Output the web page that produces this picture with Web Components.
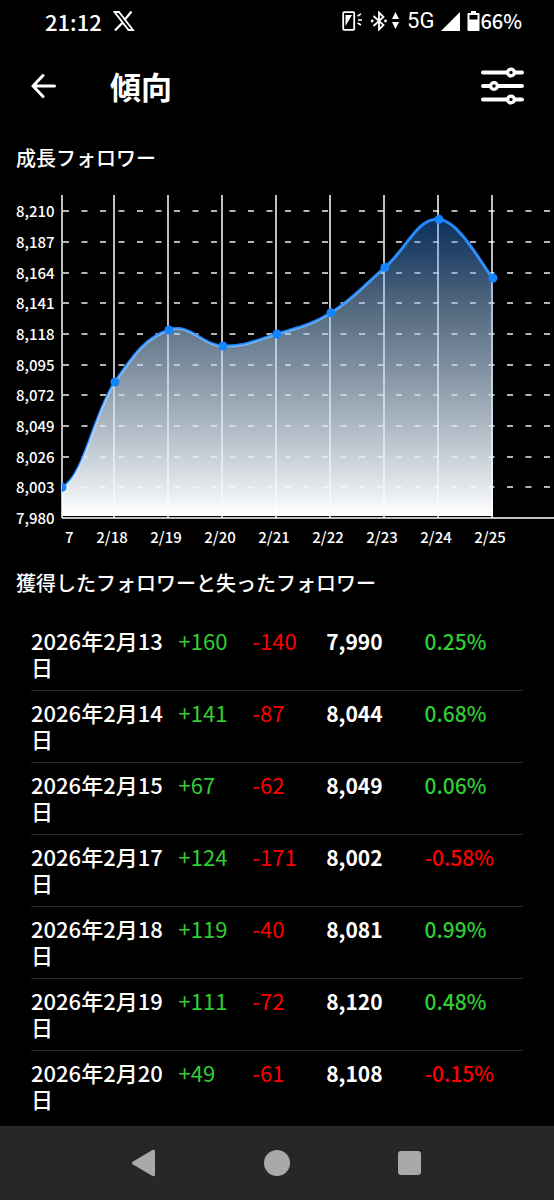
<!DOCTYPE html>
<html lang="ja">
<head>
<meta charset="utf-8">
<meta name="viewport" content="width=device-width, initial-scale=1">
<title>傾向</title>
<style>
    body {
        margin: 0;
        background-color: #000;
        color: #fff;
        font-family: "Noto Sans CJK JP", "Noto Sans", sans-serif;
    }
</style>
</head>
<body>
<trends-page>
    <status-bar slot="top" time="21:12" battery="66%"></status-bar>
    <app-header slot="top">傾向</app-header>
    <page-section heading="成長フォロワー">
        <growth-chart></growth-chart>
    </page-section>
    <page-section heading="獲得したフォロワーと失ったフォロワー">
        <follower-table></follower-table>
    </page-section>
    <nav-bar slot="bottom"></nav-bar>
</trends-page>

<script>
class TrendsPage extends HTMLElement {
    constructor() {
        super();
        this.attachShadow({ mode: 'open' })

        this.shadowRoot.innerHTML = `
        <style>
            :host {
                display: flex;
                flex-direction: column;
                min-height: 100vh;
            }

            main {
                flex: 1;
            }
        </style>

        <slot name="top"></slot>
        <main><slot></slot></main>
        <slot name="bottom"></slot>
        `
    }
}

class StatusBar extends HTMLElement {
    constructor() {
        super();
        this.attachShadow({ mode: 'open' })

        this.shadowRoot.innerHTML = `
        <style>
            :host {
                display: flex;
                justify-content: space-between;
                align-items: center;
                height: 42px;
                padding: 0 32px 0 45px;
                font-size: 22px;
                font-weight: 500;
                line-height: 26px;
            }

            div {
                display: flex;
                align-items: center;
            }

            svg {
                display: block;
                fill: #fff;
            }

            .left {
                gap: 11px;
            }

            .icons {
                gap: 7px;
            }

            .network {
                font-family: Roboto, sans-serif;
                font-weight: 400;
            }

            .battery {
                font-size: 20px;
            }
        </style>

        <div class="left">
            <span id="time"></span>
            <svg width="22" height="20" viewBox="0 0 22 20">
                <path d="M1.500 1 H6 L20 19 H15.500 Z" fill="none" stroke="#fff" stroke-width="1.8"/>
                <path d="M18.500 0.5 L12.3 8 M9.3 12 L2 19.5" stroke="#fff" stroke-width="2.2"/>
            </svg>
        </div>
        <div class="icons">
            <svg width="21" height="20" viewBox="0 0 21 20">
                <rect x="1.2" y="1.2" width="11" height="17.6" rx="1" fill="none" stroke="#fff" stroke-width="1.8"/>
                <path d="M3.5 4 H10 L3.5 15 Z"/>
                <path d="M15.5 5 L19 2.8 M16 9 H20 M15.5 12 L19 14" stroke="#fff" stroke-width="1.5"/>
            </svg>
            <svg width="30" height="20" viewBox="0 0 30 20">
                <path d="M3.5 5 L13.5 14 L9 18.5 V1.5 L13.5 6 L3.5 15" fill="none" stroke="#fff" stroke-width="1.8"/>
                <circle cx="2.2" cy="10" r="1.4"/>
                <circle cx="15.5" cy="10" r="1.4"/>
                <path d="M25.5 1 L29 8 H22 Z M25.5 18 L22 11 H29 Z"/>
            </svg>
            <span class="network">5G</span>
            <svg width="19" height="19" viewBox="0 0 19 19">
                <path d="M19 0 V19 H0 Z"/>
            </svg>
            <div class="battery">
                <svg width="13" height="20" viewBox="0 0 13 20">
                    <path fill-rule="evenodd" d="M4 0 H9 V2 H12 Q12.5 2 12.5 3 V19 Q12.5 20 11.5 20 H1.5 Q0.5 20 0.5 19 V3 Q0.5 2 1.5 2 H4 Z M2.5 4 V8.5 H10.5 V4 Z"/>
                </svg>
                <span id="battery"></span>
            </div>
        </div>
        `

        this.shadowRoot.getElementById("time").textContent = this.getAttribute("time");
        this.shadowRoot.getElementById("battery").textContent = this.getAttribute("battery");
    }
}

class AppHeader extends HTMLElement {
    constructor() {
        super();
        this.attachShadow({ mode: 'open' })

        this.shadowRoot.innerHTML = `
        <style>
            :host {
                display: flex;
                align-items: center;
                height: 88px;
                padding: 0 30px 0 31px;
            }

            h1 {
                flex: 1;
                margin: 0 0 0 54px;
                font-size: 31px;
                font-weight: 700;
                line-height: 40px;
            }

            button {
                padding: 0;
                border: 0;
                background: none;
                cursor: pointer;
            }

            svg {
                display: block;
                fill: none;
                stroke: #fff;
                stroke-linecap: round;
            }
        </style>

        <button aria-label="戻る">
            <svg width="25" height="26" viewBox="0 0 25 26" stroke-width="3">
                <path d="M23.5 13 H2 M12 2.5 L2 13 L12 23.5"/>
            </svg>
        </button>
        <h1><slot></slot></h1>
        <button aria-label="フィルター">
            <svg width="43" height="38" viewBox="0 0 43 38" stroke-width="4">
                <path d="M2 5.5 H41 M2 19 H41 M2 32.5 H41"/>
                <g fill="#000" stroke-width="3.4">
                    <circle cx="30" cy="5.5" r="3.4"/>
                    <circle cx="13" cy="19" r="3.4"/>
                    <circle cx="30" cy="32.5" r="3.4"/>
                </g>
            </svg>
        </button>
        `
    }
}

class PageSection extends HTMLElement {
    constructor() {
        super();
        this.attachShadow({ mode: 'open' })

        this.shadowRoot.innerHTML = `
        <style>
            :host {
                display: block;
            }

            h2 {
                margin: 0;
                padding: 14px 16px 8px;
                font-size: 20px;
                font-weight: 500;
                line-height: 28px;
            }
        </style>

        <h2></h2>
        <slot></slot>
        `

        this.shadowRoot.querySelector("h2").textContent = this.getAttribute("heading");
    }
}

// the first point is left of the visible range, it only shapes the curve
const GROWTH = [
    ['2/15', 8049],
    ['2/17', 8003],
    ['2/18', 8082],
    ['2/19', 8121],
    ['2/20', 8109],
    ['2/21', 8118],
    ['2/22', 8134],
    ['2/23', 8168],
    ['2/24', 8204],
    ['2/25', 8160],
];

class GrowthChart extends HTMLElement {
    constructor() {
        super();
        this.attachShadow({ mode: 'open' })

        const left = 62;
        const bottom = 338;
        const step = 54;
        const toX = i => left + (i - 1) * step - (i > 1 ? 1 : 0);
        const toY = v => bottom - (v - 7980) * 4 / 3;

        const points = GROWTH.map(([, value], i) => [toX(i), toY(value)]);

        let curve = `M${points[0]}`;
        for (let i = 1; i < points.length; i++) {
            const a = points[i - 2] || points[i - 1];
            const b = points[i - 1];
            const c = points[i];
            const d = points[i + 1] || c;
            const c1 = [b[0] + (c[0] - a[0]) * 0.2, b[1] + (c[1] - a[1]) * 0.2];
            const c2 = [c[0] - (d[0] - b[0]) * 0.2, c[1] - (d[1] - b[1]) * 0.2];
            curve += ` C${c1} ${c2} ${c}`;
        }

        let rows = '';
        for (let v = 8210; v >= 7980; v -= 23) {
            const y = Math.round(toY(v));
            rows += `<text x="16" y="${y + 6}">${v.toLocaleString('en-US')}</text>`;
            if (v > 7980) {
                rows += `<line class="dash" x1="63" x2="554" y1="${y}" y2="${y}"/>`;
            }
        }

        let columns = '';
        let labels = '<text x="65" y="363">7</text>';
        let dots = '';
        GROWTH.forEach(([day], i) => {
            if (i === 0) return;
            const x = toX(i) - (i > 1 ? 1 : 0);
            columns += `<line x1="${x}" x2="${x}" y1="15" y2="${bottom}"/>`;
            dots += `<circle cx="${points[i][0]}" cy="${points[i][1]}" r="4.5"/>`;
            if (i > 1) {
                labels += `<text x="${x - 2}" y="363" text-anchor="middle">${day}</text>`;
            }
        });

        this.shadowRoot.innerHTML = `
        <style>
            :host {
                display: block;
            }

            svg {
                display: block;
                width: 100%;
            }

            text {
                fill: #fff;
                font-size: 15px;
                font-weight: 500;
            }

            line {
                stroke: #fff;
                stroke-width: 1.5;
            }

            .dash {
                stroke: #eee;
                stroke-dasharray: 6 12.5;
            }

            .curve {
                fill: none;
                stroke: #1e88ff;
                stroke-width: 3;
            }

            .dots {
                fill: #1485ff;
            }
        </style>

        <svg viewBox="0 0 554 375" role="img" aria-label="フォロワー数の推移">
            <defs>
                <linearGradient id="area" x1="0" x2="0" y1="40" y2="335" gradientUnits="userSpaceOnUse">
                    <stop offset="0" stop-color="#2a8aff" stop-opacity="0.35"/>
                    <stop offset="0.27" stop-color="#98c0ec" stop-opacity="0.52"/>
                    <stop offset="0.54" stop-color="#c4d9ee" stop-opacity="0.70"/>
                    <stop offset="1" stop-color="#fff"/>
                </linearGradient>
                <clipPath id="plot">
                    <rect x="62" y="0" width="492" height="375"/>
                </clipPath>
            </defs>
            ${rows}
            ${columns}
            <line x1="62" x2="554" y1="${bottom}" y2="${bottom}"/>
            <g clip-path="url(#plot)">
                <path class="curve" d="${curve}"/>
                <path fill="url(#area)" d="${curve} V${bottom - 2} H${points[0][0]} Z"/>
                <g class="dots">${dots}</g>
            </g>
            ${labels}
        </svg>
        `
    }
}

const DAYS = [
    ['2026年2月13日', '+160', '-140', '7,990', '0.25%'],
    ['2026年2月14日', '+141', '-87', '8,044', '0.68%'],
    ['2026年2月15日', '+67', '-62', '8,049', '0.06%'],
    ['2026年2月17日', '+124', '-171', '8,002', '-0.58%'],
    ['2026年2月18日', '+119', '-40', '8,081', '0.99%'],
    ['2026年2月19日', '+111', '-72', '8,120', '0.48%'],
    ['2026年2月20日', '+49', '-61', '8,108', '-0.15%'],
];

class FollowerTable extends HTMLElement {
    constructor() {
        super();
        this.attachShadow({ mode: 'open' })

        this.shadowRoot.innerHTML = `
        <style>
            :host {
                display: block;
                padding: 14px 31px 0;
            }

            table {
                width: 100%;
                table-layout: fixed;
                border-collapse: collapse;
                font-size: 22px;
                line-height: 26px;
            }

            th, td {
                padding: 8px 0 11px;
                text-align: left;
                vertical-align: baseline;
                font-weight: 400;
            }

            tr + tr > * {
                border-top: 1px solid #2a2a2a;
            }

            th {
                width: 30%;
                font-weight: 500;
                word-break: break-all;
            }

            .change {
                width: 15%;
            }

            .total, .rate {
                width: 20%;
                font-size: 21px;
                font-weight: 700;
            }

            .rate {
                font-weight: 500;
            }

            .up {
                color: #32cd32;
            }

            .down {
                color: #f00;
            }
        </style>

        <table>
            <tbody>
                ${DAYS.map(([day, gained, lost, total, rate]) => `
                <tr>
                    <th scope="row">${day}</th>
                    <td class="change up">${gained}</td>
                    <td class="change down">${lost}</td>
                    <td class="total">${total}</td>
                    <td class="rate ${rate.startsWith('-') ? 'down' : 'up'}">${rate}</td>
                </tr>`).join('')}
            </tbody>
        </table>
        `
    }
}

class NavBar extends HTMLElement {
    constructor() {
        super();
        this.attachShadow({ mode: 'open' })

        this.shadowRoot.innerHTML = `
        <style>
            :host {
                display: block;
                position: sticky;
                bottom: 0;
                background-color: #272727;
            }

            nav {
                display: grid;
                grid-template-columns: repeat(3, 24%);
                justify-content: center;
                justify-items: center;
                align-items: center;
                height: 74px;
            }

            button {
                padding: 8px;
                border: 0;
                background: none;
                cursor: pointer;
            }

            svg {
                display: block;
                fill: #a9a9a9;
            }
        </style>

        <nav>
            <button aria-label="戻る">
                <svg width="26" height="28" viewBox="0 0 26 28">
                    <path d="M2 12.5 L21.5 1 Q24 0 24 2.5 V25.5 Q24 28 21.5 27 L2 15.5 Q0 14 2 12.5 Z"/>
                </svg>
            </button>
            <button aria-label="ホーム">
                <svg width="26" height="28" viewBox="0 0 26 28">
                    <circle cx="13" cy="14" r="13"/>
                </svg>
            </button>
            <button aria-label="アプリ一覧">
                <svg width="26" height="28" viewBox="0 0 26 28">
                    <rect x="1" y="2" width="23" height="24" rx="3"/>
                </svg>
            </button>
        </nav>
        `
    }
}

customElements.define('trends-page', TrendsPage)
customElements.define('status-bar', StatusBar)
customElements.define('app-header', AppHeader)
customElements.define('page-section', PageSection)
customElements.define('growth-chart', GrowthChart)
customElements.define('follower-table', FollowerTable)
customElements.define('nav-bar', NavBar)
</script>
</body>
</html>
